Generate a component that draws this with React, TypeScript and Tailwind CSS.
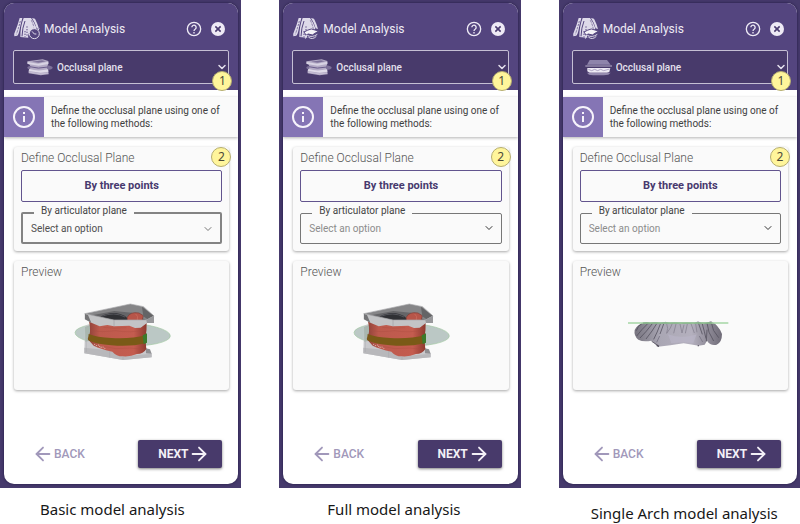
import React, { useId, useState } from "react";
import { ArrowLeft, ArrowRight, ChevronDown } from "lucide-react";
import clsx from "clsx";

type Variant = "basic" | "full" | "single";

interface Panel {
  variant: Variant;
  caption: string;
  captionClass: string;
}

const panels: Panel[] = [
  { variant: "basic", caption: "Basic model analysis", captionClass: "pl-10 pt-2.5" },
  { variant: "full", caption: "Full model analysis", captionClass: "pl-12 pt-2.5" },
  { variant: "single", caption: "Single Arch model analysis", captionClass: "pl-8 pt-3.5" },
];

const AnalysisIcon = ({ variant }: { variant: Variant }) => (
  <svg viewBox="0 0 84 72" className="h-6 w-7 shrink-0" aria-hidden="true">
    <g fill="#dedaea">
      <path d="M20 3 L28 3 Q22 24 19 42 Q17 52 13 56 L4 58 Q1 53 6 44 Q14 25 20 3Z" />
      <path d="M32 3 H54 Q64 16 70 34 L66 40 Q56 36 48 47 Q44 57 46 62 L22 60 Q22 28 32 3Z" />
      <path d="M57 3 L66 5 Q74 20 78 36 L71 34 Q66 16 57 3Z" />
    </g>
    <g stroke="#54457f" fill="none">
      <path d="M22 12 Q18 30 10 52" strokeWidth="2" strokeDasharray="7 3" />
      <path d="M36 12 Q28 32 27 58" strokeWidth="3" />
      <path d="M55 10 Q62 24 64 37" strokeWidth="2" strokeDasharray="7 3" />
      <path d="M42 28 V60 M36 42 V60" strokeWidth="3" strokeDasharray="4 4" />
    </g>
    {variant === "basic" ? (
      <g fill="#54457f" stroke="#dedaea" strokeWidth="3">
        <circle cx="64" cy="50" r="15" />
        <path d="M64 35 V30 M59 30 H69 M75 39 L79 35 M57 43 L64 51 H70" />
      </g>
    ) : (
      <g>
        <path d="M36 45 Q48 38 58 36 L80 42 L61 54 L49 51 L42 54Z" fill="#f4f2f8" stroke="#54457f" strokeWidth="3" />
        <path d="M46 55 Q60 63 76 52 M44 53 L40 65 M49 60 Q61 70 73 58" fill="none" stroke="#dedaea" strokeWidth="3" />
      </g>
    )}
  </svg>
);

const PlaneThumb = ({ variant }: { variant: Variant }) =>
  variant === "single" ? (
    <svg viewBox="0 0 84 54" className="h-[18px] w-7 shrink-0" aria-hidden="true">
      <path d="M14 6 H66 L77 20 H6Z" fill="#8e84ab" />
      <path d="M1 24 H81" stroke="#bdb5cf" strokeWidth="3" />
      <path d="M7 30 H76 L73 42 L66 44 H14 L7 40Z" fill="#eeeaf5" />
      <path d="M10 34 L20 38 L29 34 L38 38 L47 34 L56 38 L74 33" stroke="#9187ab" strokeWidth="2" fill="none" />
      <path d="M6 44 H77 L70 50 L56 52 H24 L12 50Z" fill="#968bb0" />
    </svg>
  ) : (
    <svg viewBox="0 0 84 54" className="h-[18px] w-7 shrink-0" aria-hidden="true">
      <ellipse cx="42" cy="29" rx="38" ry="9" fill="#7d7199" />
      <path d="M4 10 L50 4 L67 9 V18 L64 24 Q62 32 66 40 L68 49 L44 52 L8 46 V37 L13 31 Q14 24 10 19 L4 17Z" fill="#b3aac5" />
      <path d="M5 12 L36 17 L67 11 V18 L38 23 L5 18Z" fill="#d8d3e3" />
      <path d="M18 11 L48 7 L60 10 L38 14Z" fill="#7d7199" />
      <path d="M11 26 Q36 34 66 27" stroke="#6a5c8c" strokeWidth="3" fill="none" />
      <path d="M10 33 Q36 41 66 34 L68 41 L44 44 L9 39Z" fill="#e0dbe9" />
      <path d="M8 42 L44 48 L68 45" stroke="#d0c9dd" strokeWidth="2" fill="none" />
    </svg>
  );

const FullModel = () => (
  <svg viewBox="0 0 360 240" className="h-20 w-[120px]" role="img" aria-label="Full model preview">
    <defs>
      <linearGradient id="gum" x1="0" x2="1">
        <stop offset="0" stopColor="#8d4038" />
        <stop offset=".2" stopColor="#bd5a4d" />
        <stop offset=".78" stopColor="#c45c4f" />
        <stop offset="1" stopColor="#8d392f" />
      </linearGradient>
    </defs>
    {/* occlusal plane */}
    <ellipse cx="170" cy="133" rx="143" ry="35" transform="rotate(2 170 133)" fill="#bbc8c5" stroke="#a4c9a4" strokeWidth="2" />
    {/* lower base */}
    <path d="M57 108 L68 103 L76 144 L130 178 L240 176 L240 188 L257 190 V202 L171 210 L55 190Z" fill="#c9c9cc" />
    <path d="M55 173 L130 181 L169 199 L257 191 V202 L171 210 L55 190Z" fill="#b8b8bb" />
    <path d="M131 181 V203 M171 200 V209 M61 113 V186" stroke="#9f9fa3" strokeWidth="1" />
    <path d="M57 110 L72 106 L79 151 L58 155Z" fill="#a9b7af" />
    <path d="M240 175 L252 178 L257 191 L240 190Z" fill="#8f8f92" />
    {/* gums */}
    <path d="M69 94 L242 91 Q243 121 238 145 L241 177 Q232 192 213 192 Q193 201 170 199 Q151 199 139 185 Q105 178 83 167 L65 147 Q77 129 69 94Z" fill="url(#gum)" />
    <path d="M75 121 Q106 128 148 122 Q194 130 238 119 M92 170 Q120 168 150 176 Q194 171 235 178 M112 112 Q143 117 181 113" stroke="#a84b40" strokeWidth="2" fill="none" opacity=".5" />
    <path d="M68 132 Q93 143 136 144 Q195 147 240 136 L240 160 Q192 171 136 166 Q90 163 66 150Z" fill="#7a5a17" />
    <path d="M230 136 L243 130 V158 L233 162Z" fill="#3c7a2c" />
    <path d="M85 163 l7 4 l6 -2 l5 7 l9 -1 l5 5" stroke="#e3d3cc" strokeWidth="3" strokeDasharray="3 3" fill="none" />
    {/* upper base, inside then rim */}
    <path d="M57 71 L193 42 L232 50 L265 79 L240 92 L139 94 L68 78Z" fill="#858587" />
    <path d="M78 76 L145 63 L197 68 L240 90 L139 95Z" fill="#656568" />
    <path d="M103 80 Q145 57 181 81 L187 91 H147Z" fill="#303135" />
    <path d="M107 79 Q145 64 177 81" stroke="#55565c" strokeWidth="3" fill="none" />
    <path d="M184 82 Q192 64 219 69 L232 77 L228 92 H184Z" fill="#b75549" stroke="#7f3c35" strokeWidth="2" />
    <path d="M209 72 Q218 78 214 90" stroke="#d07061" strokeWidth="2" fill="none" />
    <path d="M228 51 L264 78 L247 89 L232 79Z" fill="#646466" />
    <path d="M56 71 L144 90 L241 90 L264 77 V99 L243 99 L224 113 L207 114 L190 107 L144 109 L124 105 L101 109 L76 98 L56 88Z" fill="#c3c4c6" />
    <path d="M56 71 L193 42 L233 50 L264 78 L241 90 L144 90Z" fill="none" stroke="#a9a9ac" strokeWidth="2" />
    <path d="M57 72 L66 75 L76 98 L57 88Z" fill="#747476" />
    <path d="M241 90 L264 78 V99 L243 99Z" fill="#98989b" />
    <path d="M144 90 V109" stroke="#a0a0a3" strokeWidth="2" />
  </svg>
);

const ArchModel = () => (
  <svg viewBox="0 0 360 240" className="h-20 w-[120px]" role="img" aria-label="Single arch preview">
    <defs>
      <linearGradient id="arch" x1="0" x2="1">
        <stop offset="0" stopColor="#76737e" />
        <stop offset=".3" stopColor="#aaa7b4" />
        <stop offset=".65" stopColor="#b4b0be" />
        <stop offset="1" stopColor="#706c78" />
      </linearGradient>
    </defs>
    <path d="M57 99 Q68 94 79 100 Q93 93 107 100 L125 95 L137 100 Q153 94 169 101 Q188 96 207 101 L222 94 L237 101 L261 94 Q284 106 294 132 Q294 157 278 164 Q260 169 249 152 L242 164 L224 167 L179 160 L139 166 L102 170 L82 152 Q58 157 43 149 Q29 138 32 120 Q40 104 57 99Z" fill="url(#arch)" />
    <g stroke="#514e5b" strokeWidth="3" fill="none" opacity=".75">
      <path d="M56 99 Q41 107 37 122 M72 100 Q53 118 38 138 M85 101 Q68 124 48 144 M98 101 Q86 122 66 147 M109 102 Q100 127 89 148 M119 102 L108 132 M223 98 L235 133 M235 102 Q242 127 246 146 M249 99 Q251 127 269 153 M262 97 Q264 122 284 143" />
      <path d="M249 119 L247 154 M83 154 L103 167" />
    </g>
    <g stroke="#7e7a8a" strokeWidth="2" fill="none">
      <path d="M128 101 Q134 114 128 130 L139 114 L145 100 M156 102 L149 130 M168 102 L174 129 L180 104 M190 102 L184 130 M201 101 L211 129 M215 102 L219 127" />
      <path d="M107 138 L98 157 M226 138 L236 156" strokeWidth="3" />
    </g>
    <path d="M132 133 Q175 148 218 133 L208 159 L178 157 L142 160Z" fill="#bab6c7" opacity=".65" />
    <path d="M98 166 l7 3 M223 166 v3" stroke="#4d4957" strokeWidth="4" />
    <path d="M12 99 H313" stroke="#a5d6a5" strokeWidth="4" />
    <path d="M57 99 H262" stroke="#5b8f62" strokeWidth="2" />
  </svg>
);

const HelpIcon = () => (
  <svg viewBox="0 0 24 24" className="size-4" fill="none" stroke="#eeeaf5" strokeWidth="2" aria-hidden="true">
    <circle cx="12" cy="12" r="10" />
    <path d="M8.8 9.5 A3.2 3.2 0 1 1 14 12 Q12 13.2 12 15" />
    <path d="M12 16.5 V18.7" />
  </svg>
);

const CloseIcon = () => (
  <svg viewBox="0 0 24 24" className="size-4" aria-hidden="true">
    <circle cx="12" cy="12" r="10.5" fill="#eeeaf5" />
    <path d="M8 8 L16 16 M16 8 L8 16" stroke="#4a3b70" strokeWidth="2.4" />
  </svg>
);

const InfoIcon = () => (
  <svg viewBox="0 0 24 24" className="size-6" fill="none" stroke="#f6f3fb" strokeWidth="2" aria-hidden="true">
    <circle cx="12" cy="12" r="10" />
    <path d="M12 11 V17 M12 7 V9" />
  </svg>
);

const Badge = ({ children, className }: { children: React.ReactNode; className: string }) => (
  <span
    className={clsx(
      "absolute z-10 flex size-5 items-center justify-center rounded-full border border-[#b5ad70] bg-[#fff59b] font-['Noto_Sans',sans-serif] text-xs text-[#4c4938]",
      className
    )}
  >
    {children}
  </span>
);

const AnalysisPanel = ({ variant }: { variant: Variant }) => {
  const id = useId();
  const [step, setStep] = useState("occlusal");
  const [articulator, setArticulator] = useState("");
  const active = variant === "basic";

  return (
    <section className="bg-[#463a6c] pt-[3px] pr-[3px] pb-1 pl-1">
      <div className="flex flex-col overflow-hidden rounded-[10px] bg-white shadow-[0_0_3px_#211942]">
        <header className="bg-[#54457f] px-[9px] pt-3.5 pb-1.5">
          <div className="flex h-6 items-center">
            <AnalysisIcon variant={variant} />
            <h2 className="ml-[3px] flex-1 text-[12px] text-[#eeebf4]">Model Analysis</h2>
            <button type="button" aria-label="Help" className="mr-2">
              <HelpIcon />
            </button>
            <button type="button" aria-label="Close" className="mr-[3px]">
              <CloseIcon />
            </button>
          </div>
          <div className="relative mt-[9px] flex h-[34px] items-center rounded-[2px] border border-[#c5bfd4] bg-[#483a6b] pl-3">
            <PlaneThumb variant={variant} />
            <select
              aria-label="Analysis step"
              value={step}
              onChange={(e) => setStep(e.target.value)}
              className="min-w-0 flex-1 appearance-none pl-[3px] text-[10px] font-medium text-[#e5e1ee] outline-none"
            >
              <option value="occlusal">Occlusal plane</option>
            </select>
            <ChevronDown strokeWidth={3} className="size-3 text-[#e5e1ee]" />
            <Badge className="-right-1 -bottom-2">1</Badge>
          </div>
        </header>

        <div className="mt-[7px] flex h-10 bg-[#fafafa] shadow-[0_1px_3px_#0000004d]">
          <div className="flex w-10 shrink-0 items-center justify-center bg-[#8575b5]">
            <InfoIcon />
          </div>
          <p className="self-center pr-3 pl-[7px] text-[10px] leading-[13px] text-[#3f3f3f]">
            Define the occlusal plane using one of the following methods:
          </p>
        </div>

        <div className="relative mt-2.5 mr-[9px] ml-2.5 rounded-[3px] bg-[#fafafa] px-[7px] pt-px pb-[7px] shadow-[0_1px_3px_#00000059]">
          <h3 className="text-[12px] leading-5 font-light text-[#555]">Define Occlusal Plane</h3>
          <Badge className="-right-0.5 top-0">2</Badge>
          <button
            type="button"
            className="mt-0.5 block h-8 w-full rounded-[2px] border border-[#62548e] text-[11px] font-bold text-[#47396e]"
          >
            By three points
          </button>
          <fieldset
            className={clsx(
              "mt-[3px] rounded-[2px]",
              active ? "border-2 border-[#838383]" : "border border-[#777]"
            )}
          >
            <legend className="ml-[11px] px-[7px] pb-1 text-[10px] leading-3 text-[#444]">
              <label htmlFor={id}>By articulator plane</label>
            </legend>
            <div className={clsx("flex items-center", active ? "h-[21px] pb-1.5" : "h-[22px] pb-2")}>
              <select
                id={id}
                value={articulator}
                onChange={(e) => setArticulator(e.target.value)}
                className={clsx(
                  "min-w-0 flex-1 appearance-none pl-2 text-[10px] outline-none",
                  active ? "text-[#4f4f4f]" : "text-[#8c8c8c]"
                )}
              >
                <option value="">Select an option</option>
              </select>
              <ChevronDown className={clsx("mr-1.5 size-3", active ? "text-[#777]" : "text-[#333]")} />
            </div>
          </fieldset>
        </div>

        <div className="mt-2.5 mr-[9px] ml-2.5 rounded-[3px] bg-[#fafafa] px-[7px] pt-px pb-5 shadow-[0_1px_3px_#00000059]">
          <h3 className="text-[12px] leading-5 font-light text-[#555]">Preview</h3>
          <div className="mt-2 flex justify-center pl-2">
            {variant === "single" ? <ArchModel /> : <FullModel />}
          </div>
        </div>

        <footer className="mt-[50px] flex items-center justify-between pr-4 pb-4 pl-7">
          <button type="button" className="flex items-center text-[12px] font-medium text-[#a198ba]">
            <ArrowLeft className="size-[22px]" />
            BACK
          </button>
          <button
            type="button"
            className="flex h-7 w-[84px] items-center justify-center rounded-[2px] bg-[#483a6b] pl-2 text-[12px] font-bold text-[#f3f0f7] shadow-[0_1px_3px_#00000080]"
          >
            NEXT
            <ArrowRight className="size-[22px]" />
          </button>
        </footer>
      </div>
    </section>
  );
};

export default function App() {
  return (
    <main className="grid min-h-screen grid-cols-3 items-start gap-x-[38px] bg-white font-[Roboto,sans-serif]">
      {panels.map((panel) => (
        <figure key={panel.variant}>
          <AnalysisPanel variant={panel.variant} />
          <figcaption
            className={clsx(
              "font-['Noto_Sans',sans-serif] text-[15px] leading-[22px] whitespace-nowrap text-[#171717]",
              panel.captionClass
            )}
          >
            {panel.caption}
          </figcaption>
        </figure>
      ))}
    </main>
  );
}
